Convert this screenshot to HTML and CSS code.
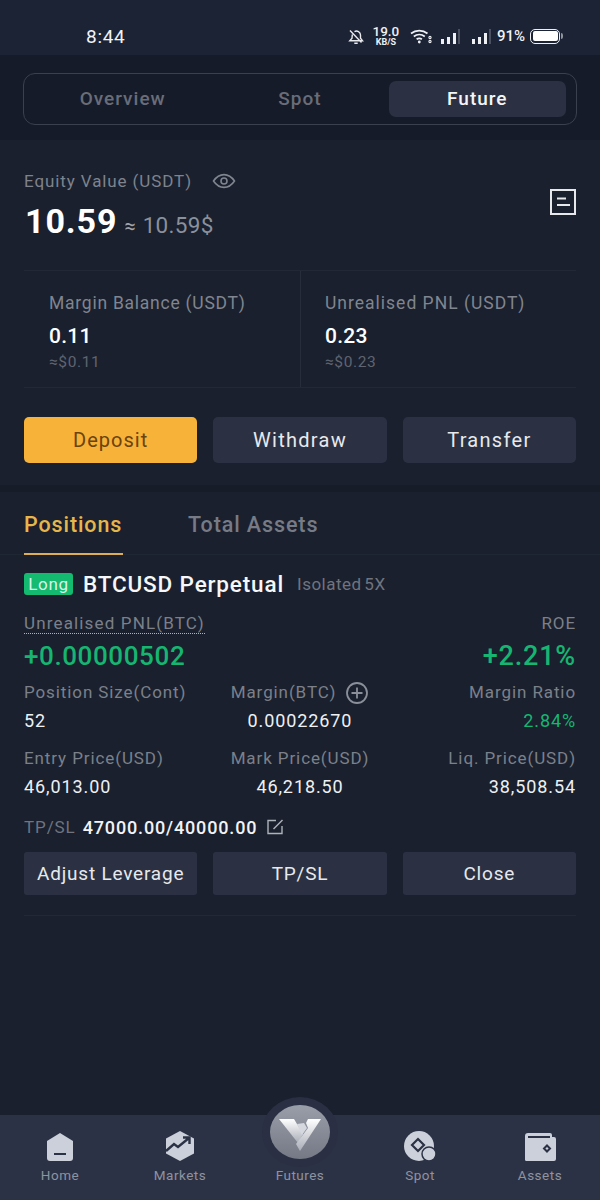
FILE: index.html
```html
<!DOCTYPE html>
<html lang="en">
<head>
<meta charset="utf-8">
<title>Futures account</title>
<link rel="stylesheet" href="styles.css">
</head>
<body>
<div class="app">
  <header class="status">
    <span class="time">8:44</span>
    <div class="status-icons">
      <svg class="ic-bell" width="16" height="17" viewBox="0 0 16 17" fill="none" stroke="#e8eaee" stroke-width="1.4"><path d="M4 12.800h10.500l-2-2.500V7a4 4 0 0 0-6-3.400M4.300 6.500 4 10.300 1.800 12.800H4M6.300 15.300h3.400M2 2.500l11.500 12"/></svg>
      <span class="speed"><b>19.0</b><i>KB/S</i></span>
      <svg class="ic-wifi" width="22" height="16" viewBox="0 0 22 16" fill="none" stroke="#eef0f3" stroke-width="1.7"><path d="M1 5.500a13 13 0 0 1 16.500 0M3.800 8.500a9 9 0 0 1 11 0M6.600 11.300a4.400 4.400 0 0 1 5.300 0"/><circle cx="9.300" cy="14" r="1.400" fill="#eef0f3" stroke="none"/><circle cx="20" cy="9.500" r="1.100" stroke-width="1.100"/><circle cx="20" cy="13.500" r="1.100" stroke-width="1.100"/></svg>
      <svg width="20" height="15" viewBox="0 0 20 15"><path fill="#eef0f3" d="M1 10h3v5H1zM7 8h3v7H7zM13 4h3v11h-3z"/><path fill="#4a5060" d="M18 0h2v15h-2z"/></svg>
      <svg class="sig2" width="20" height="15" viewBox="0 0 20 15"><path fill="#eef0f3" d="M1 10h3v5H1zM7 8h3v7H7zM13 4h3v11h-3z"/><path fill="#4a5060" d="M18 0h2v15h-2z"/></svg>
      <span class="pct">91%</span>
      <span class="battery"><span class="battery-fill"></span></span>
    </div>
  </header>

  <section class="seg-wrap">
    <div class="seg">
      <span class="seg-item">Overview</span>
      <span class="seg-item">Spot</span>
      <span class="seg-item seg-on">Future</span>
    </div>
  </section>

  <section class="summary">
    <div class="equity">
      <div>
        <div class="equity-label">
          <span>Equity Value (USDT)</span>
          <svg width="24" height="16" viewBox="0 0 24 16" fill="none" stroke="#80858f" stroke-width="1.6"><path d="M1.500 8C4.500 3.600 8 1.600 12 1.600S19.500 3.600 22.500 8C19.500 12.400 16 14.400 12 14.400S4.500 12.400 1.500 8Z"/><circle cx="12" cy="8" r="3"/></svg>
        </div>
        <div class="equity-val"><strong>10.59</strong><span class="approx">≈</span><span class="usd">10.59$</span></div>
      </div>
      <svg class="doc" width="26" height="26" viewBox="0 0 26 26" fill="none" stroke="#e6e8ec" stroke-width="2"><path d="M1 1h24v24H1z"/><path d="M7 9.500h9M7 16h13"/></svg>
    </div>
    <div class="balances">
      <div class="bal">
        <div class="bal-label">Margin Balance (USDT)</div>
        <div class="bal-val">0.11</div>
        <div class="bal-sub">≈$0.11</div>
      </div>
      <div class="bal bal-right">
        <div class="bal-label">Unrealised PNL (USDT)</div>
        <div class="bal-val">0.23</div>
        <div class="bal-sub">≈$0.23</div>
      </div>
    </div>
    <div class="actions">
      <button class="btn btn-primary">Deposit</button>
      <button class="btn">Withdraw</button>
      <button class="btn">Transfer</button>
    </div>
  </section>

  <nav class="tabs">
    <span class="tab tab-on">Positions</span>
    <span class="tab">Total Assets</span>
  </nav>

  <section class="position">
    <div class="pos-title">
      <span class="long">Long</span>
      <span class="symbol">BTCUSD Perpetual</span>
      <span class="mode">Isolated 5X</span>
    </div>
    <div class="pnl-row">
      <div>
        <span class="lbl dotted">Unrealised PNL(BTC)</span>
        <div class="pnl">+0.00000502</div>
      </div>
      <div class="right">
        <span class="lbl">ROE</span>
        <div class="pnl pnl-roe">+2.21%</div>
      </div>
    </div>
    <div class="grid">
      <div><div class="lbl">Position Size(Cont)</div><div class="val">52</div></div>
      <div class="center">
        <div class="lbl lbl-icon">Margin(BTC)
          <svg width="24" height="24" viewBox="0 0 24 24" fill="none" stroke="#8a8f99" stroke-width="1.8"><circle cx="12" cy="12" r="10"/><path d="M12 6.500v11M6.500 12h11"/></svg>
        </div>
        <div class="val">0.00022670</div>
      </div>
      <div class="right"><div class="lbl">Margin Ratio</div><div class="val green">2.84%</div></div>
      <div><div class="lbl">Entry Price(USD)</div><div class="val">46,013.00</div></div>
      <div class="center"><div class="lbl">Mark Price(USD)</div><div class="val">46,218.50</div></div>
      <div class="right"><div class="lbl">Liq. Price(USD)</div><div class="val">38,508.54</div></div>
    </div>
    <div class="tpsl">
      <span class="lbl">TP/SL</span>
      <strong>47000.00/40000.00</strong>
      <svg width="17" height="16" viewBox="0 0 17 16" fill="none" stroke="#aeb2ba" stroke-width="1.400"><path d="M9 1.500H1v13h14V7"/><path d="M6.500 10 15.500 1"/></svg>
    </div>
    <div class="actions pos-actions">
      <button class="btn btn-flat">Adjust Leverage</button>
      <button class="btn btn-flat">TP/SL</button>
      <button class="btn btn-flat">Close</button>
    </div>
    <div class="rule"></div>
  </section>

  <footer class="nav">
    <div class="nav-item">
      <svg width="26" height="28" viewBox="0 0 26 28"><path fill="#ccd0da" d="M13 0 26 8v17a3 3 0 0 1-3 3H3a3 3 0 0 1-3-3V8z"/><path fill="#2c3245" d="M7 20h12v2H7z"/></svg>
      <span>Home</span>
    </div>
    <div class="nav-item">
      <svg width="30" height="30" viewBox="0 0 30 30"><path fill="#ccd0da" d="M15 0 29 7.500v15L15 30 1 22.500v-15z"/><path fill="none" stroke="#2c3245" stroke-width="2.400" d="M1 20l8-7 4 3 11-9M18 6.500h6.500V13"/></svg>
      <span>Markets</span>
    </div>
    <div class="nav-item nav-center">
      <div class="logo-halo"><div class="logo">
        <svg width="42" height="32" viewBox="0 0 42 32"><defs><linearGradient id="lg" x1="0" y1="0" x2="0" y2="1"><stop offset="0" stop-color="#ffffff"/><stop offset="1" stop-color="#a9adb7"/></linearGradient></defs><path fill="url(#lg)" d="M0 0h15l9 15-5 9z"/><path fill="#d5d8de" d="M18 5l7-1 3 5-5 7z"/><path fill="url(#lg)" d="M29 0h13L21 32l-4-7 12-16-2-5z"/></svg>
      </div></div>
      <span>Futures</span>
    </div>
    <div class="nav-item">
      <svg width="33" height="30" viewBox="0 0 33 30"><circle cx="15" cy="15" r="15" fill="#ccd0da"/><path fill="none" stroke="#2c3245" stroke-width="2.200" d="M14 8l6 6-6 6-6-6z"/><circle cx="25" cy="23" r="7" fill="#ccd0da" stroke="#2c3245" stroke-width="1.500"/></svg>
      <span>Spot</span>
    </div>
    <div class="nav-item">
      <svg width="31" height="28" viewBox="0 0 31 28"><path fill="#ccd0da" d="M3 0h22a2 2 0 0 1 2 2v2h2a2 2 0 0 1 2 2v20a2 2 0 0 1-2 2H3a2 2 0 0 1-3-2V3a3 3 0 0 1 3-3z"/><path fill="#2c3245" d="M3 3h22v2H3z"/><path fill="none" stroke="#2c3245" stroke-width="2" d="M22 12.500l3 3-3 3-3-3z"/></svg>
      <span>Assets</span>
    </div>
  </footer>
</div>
</body>
</html>
```
FILE: styles.css
```css
* { box-sizing: border-box; }
html, body { margin: 0; padding: 0; }
body { background: #1a202e; font-family: Roboto, "Liberation Sans", sans-serif; color: #fff; }
.app { width: 600px; height: 1200px; display: flex; flex-direction: column; overflow: hidden; background: #1a202e; }

.status { height: 55px; flex: none; background: #1c2335; display: flex; align-items: center; justify-content: space-between; padding: 17px 37px 0 86px; }
.time { font-size: 19px; letter-spacing: 0.700px; color: #f1f2f4; }
.status-icons { display: flex; align-items: center; }
.ic-bell { margin-right: 10px; }
.speed { display: flex; flex-direction: column; align-items: center; margin-right: 12px; color: #eef0f3; width: 24px; }
.speed b { font-size: 13.500px; font-weight: 500; line-height: 11px; height: 11px; }
.speed i { font-size: 9px; font-style: normal; font-weight: 700; line-height: 9px; height: 9px; margin-top: 1px; }
.ic-wifi { margin-right: 8px; }
.sig2 { margin-left: 11px; }
.pct { font-size: 15px; margin: 0 5px 0 6px; color: #f1f2f4; font-weight: 500; }
.battery { width: 30px; height: 15px; border: 1.500px solid #eef0f3; border-radius: 5px; padding: 1.500px; display: block; margin-right: 3px; position: relative; }
.battery::after { content: ""; position: absolute; right: -4px; top: 3px; width: 2px; height: 6px; background: #8f939b; border-radius: 0 2px 2px 0; }
.battery-fill { display: block; width: 100%; height: 100%; background: #fff; border-radius: 2px; }

.seg-wrap { height: 85px; flex: none; background: #161b29; padding: 18px 23px 0; }
.seg { height: 52px; border: 1.500px solid #3b404f; border-radius: 12px; display: grid; grid-template-columns: 1fr 1fr 1fr; align-items: center; padding: 0 10px; }
.seg-item { font-size: 19px; font-weight: 500; letter-spacing: 1px; color: #686d79; text-align: center; height: 36px; line-height: 36px; }
.seg-on { background: #2b3142; color: #f4f5f7; border-radius: 7px; }

.summary { flex: none; height: 352px; padding: 0 24px; background: linear-gradient(#1a202e 0 345px, #171c29 345px); }
.equity { height: 131px; display: flex; justify-content: space-between; border-bottom: 1.500px solid #222836; padding-top: 29px; }
.equity-label { display: flex; align-items: center; gap: 20px; font-size: 17px; color: #7e838d; letter-spacing: 0.900px; height: 24px; }
.equity-val { display: flex; align-items: baseline; margin-top: 8px; margin-left: 1px; }
.equity-val strong { font-size: 34px; font-weight: 700; letter-spacing: 0.900px; color: #fff; }
.approx { font-size: 20px; color: #a0a4ad; margin-left: 7px; }
.usd { font-size: 22.500px; color: #8b909a; margin-left: 7px; letter-spacing: 0.300px; }
.doc { margin-top: 20px; }

.balances { display: grid; grid-template-columns: 276px 1fr; height: 117px; border-bottom: 1.500px solid #222836; }
.bal { padding: 21px 0 0 25px; }
.bal-right { border-left: 1.500px solid #272d3b; padding-left: 24px; }
.bal-right .bal-label { letter-spacing: 1px; }
.bal-label { font-size: 17.500px; line-height: 22px; color: #80858f; letter-spacing: 0.750px; white-space: nowrap; }
.bal-val { font-size: 21px; font-weight: 500; line-height: 26px; margin-top: 9px; color: #fff; letter-spacing: 0.300px; }
.bal-sub { font-size: 15.500px; line-height: 20px; margin-top: 3px; color: #5f6470; letter-spacing: 0.600px; }

.actions { display: grid; grid-template-columns: repeat(3, 1fr); gap: 16px; margin-top: 29px; height: 46px; }
.btn { border: 0; border-radius: 5px; background: #2b3142; color: #e7e9ed; font-family: inherit; font-size: 20px; letter-spacing: 1.300px; padding: 0; height: 100%; }
.btn-primary { background: #f6b239; color: #6a430e; letter-spacing: 1px; }

.tabs { height: 63px; flex: none; display: flex; gap: 65px; padding: 0 24px; border-bottom: 1.500px solid #1f2634; }
.tab { font-size: 21.500px; font-weight: 500; letter-spacing: 0.900px; color: #767b86; height: 63px; line-height: 66px; white-space: nowrap; }
.tab-on { color: #e5b64c; border-bottom: 2px solid #dcae55; width: 99px; }

.position { flex: 1; padding: 17px 24px 0; background: #1a202e; }
.pos-title { display: flex; align-items: center; height: 24px; }
.long { background: #13ba70; color: #d8f5e6; font-size: 17px; line-height: 22px; height: 22px; width: 49px; text-align: center; border-radius: 3px; letter-spacing: 0.700px; }
.symbol { font-size: 22.500px; font-weight: 500; letter-spacing: 0.850px; margin-left: 10px; color: #f6f7f8; white-space: nowrap; }
.mode { font-size: 17px; color: #6f747f; letter-spacing: 0.500px; margin-left: 13px; word-spacing: -2px; white-space: nowrap; }

.lbl { font-size: 17px; color: #7b808a; letter-spacing: 0.900px; line-height: 21px; white-space: nowrap; }
.dotted { display: inline-block; border-bottom: 1.500px dotted #aeb2ba; line-height: 20px; letter-spacing: 1.150px; }
.pnl-row { display: flex; justify-content: space-between; margin-top: 17px; height: 62px; }
.pnl { font-size: 26px; font-weight: 500; color: #16b672; line-height: 30px; margin-top: 7px; letter-spacing: 0.600px; }
.pnl-roe { font-size: 27px; letter-spacing: 0.800px; }
.right { text-align: right; }
.center { text-align: center; }

.grid { display: grid; grid-template-columns: repeat(3, 1fr); gap: 18px 0; margin-top: 7px; }
.grid > div { height: 48px; }
.val { font-size: 18px; line-height: 24px; color: #eef0f3; letter-spacing: 0.900px; margin-top: 6px; }
.green { color: #16b672; }
.lbl-icon { display: flex; align-items: center; justify-content: center; gap: 9px; height: 21px; }
.tpsl { display: flex; align-items: center; height: 24px; margin-top: 19px; gap: 7px; }
.tpsl .lbl { font-size: 17px; color: #6f747f; }
.tpsl strong { font-size: 18px; font-weight: 500; letter-spacing: 0.850px; color: #f2f3f5; white-space: nowrap; }
.tpsl svg { margin-left: 3px; }
.pos-actions { margin-top: 13px; height: 43px; }
.btn-flat { font-size: 19px; letter-spacing: 0.800px; border-radius: 3px; }
.rule { border-top: 1.500px solid #222836; margin-top: 20px; }

.nav { height: 85px; flex: none; background: #2c3245; display: grid; grid-template-columns: repeat(5, 1fr); position: relative; }
.nav-item { display: flex; flex-direction: column; align-items: center; justify-content: flex-end; padding-bottom: 16px; gap: 6px; font-size: 13.500px; letter-spacing: 0.500px; color: #8e93a0; line-height: 17px; position: relative; }
.nav-item svg { flex: none; }
.logo-halo { position: absolute; top: -18px; left: 50%; margin-left: -38px; width: 76px; height: 70px; border-radius: 50%; background: #2a2f43; display: flex; align-items: center; justify-content: center; }
.logo { width: 60px; height: 54px; border-radius: 50%; background: linear-gradient(#9a9ea9, #747985); display: flex; align-items: center; justify-content: center; }
.logo svg { margin-top: 6px; }
```
